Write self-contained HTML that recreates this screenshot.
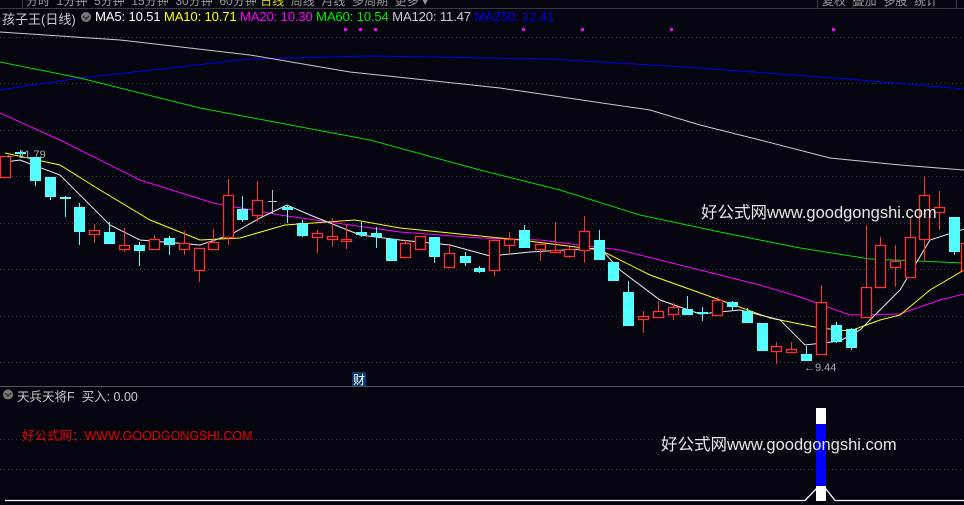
<!DOCTYPE html>
<html><head><meta charset="utf-8"><style>
body{margin:0;background:#05050f;width:964px;height:505px;overflow:hidden;position:relative;font-family:"Liberation Sans","Noto Sans CJK SC",sans-serif}
.t{position:absolute;white-space:nowrap}
</style></head><body>
<svg width="964" height="505" style="position:absolute;left:0;top:0" id="s">
<rect width="964" height="505" fill="#05050f"/>
<line x1="0" y1="8.5" x2="964" y2="8.5" stroke="#3a3a44"/>
<line x1="22.5" y1="0" x2="22.5" y2="8" stroke="#3a3a44"/>
<line x1="817.5" y1="0" x2="817.5" y2="8" stroke="#3a3a44"/>
<line x1="853.5" y1="0" x2="853.5" y2="8" stroke="#3a3a44"/>
<line x1="886.5" y1="0" x2="886.5" y2="8" stroke="#3a3a44"/>
<line x1="921.5" y1="0" x2="921.5" y2="8" stroke="#3a3a44"/>
<line x1="956.5" y1="0" x2="956.5" y2="8" stroke="#3a3a44"/>
<g stroke="#3c3c48" stroke-dasharray="1,3">
<line x1="0" y1="37.5" x2="964" y2="37.5"/><line x1="0" y1="83.5" x2="964" y2="83.5"/>
<line x1="0" y1="130.5" x2="964" y2="130.5"/><line x1="0" y1="176.5" x2="964" y2="176.5"/>
<line x1="0" y1="223.5" x2="964" y2="223.5"/><line x1="0" y1="269.5" x2="964" y2="269.5"/>
<line x1="0" y1="316.5" x2="964" y2="316.5"/><line x1="0" y1="362.5" x2="964" y2="362.5"/>
<line x1="0" y1="439.5" x2="964" y2="439.5"/><line x1="0" y1="469.5" x2="964" y2="469.5"/>
</g>
<line x1="0" y1="386.5" x2="964" y2="386.5" stroke="#55555f"/>
<g fill="#ff00ff"><rect x="344" y="28" width="3" height="3"/><rect x="359" y="28" width="3" height="3"/><rect x="374" y="28" width="3" height="3"/><rect x="522" y="28" width="3" height="3"/><rect x="581" y="28" width="3" height="3"/><rect x="670" y="28" width="3" height="3"/><rect x="832" y="28" width="3" height="3"/></g>
<g fill="none" stroke-width="1">
<polyline stroke="#0000ee" points="0,90 80,78 250,59 370,56 550,59 700,68 860,80 964,89"/>
<polyline stroke="#cccccc" points="0,32 120,40 250,55 350,72 500,88 650,110 700,125 760,140 830,158 900,165 964,170"/>
<polyline stroke="#00dd00" points="0,62 80,78 200,108 370,140 480,170 560,190 640,215 720,232 800,248 870,259 964,263"/>
<polyline stroke="#ff00ff" points="0,113 60,140 140,180 213,203 280,215 400,232 480,238 540,240 620,250 700,270 760,285 800,297 850,315 900,314 940,300 964,294"/>
<polyline stroke="#ffff00" points="5,153 60,165 100,190 150,220 200,240 240,238 285,225 355,220 400,228 470,235 520,240 600,250 650,275 720,300 770,318 820,328 850,331 880,320 900,315 930,290 964,270"/>
<polyline stroke="#eeeeee" points="5,162 20,160 60,175 110,225 140,240 200,245 230,235 260,218 287,205 310,215 360,235 400,240 450,245 490,256 530,252 600,248 620,270 660,300 700,314 740,310 780,320 805,345 840,341 860,330 880,310 900,290 930,240 964,229"/>
</g>
<g id="c"></g>
<text x="5" y="158" fill="#aaaaaa" font-size="11" font-family="Liberation Sans">← 11.79</text>
<text x="804" y="371" fill="#aaaaaa" font-size="11" font-family="Liberation Sans">←9.44</text>
<rect x="352" y="372" width="14" height="14" fill="#0c3a6a"/>
<text x="353" y="384" fill="#ffffff" font-size="12" font-family="Noto Sans CJK SC">财</text>
<rect x="816" y="408" width="10" height="16" fill="#fff"/>
<rect x="816" y="424" width="10" height="62" fill="#0000ff"/>
<rect x="816" y="486" width="10" height="15" fill="#fff"/>
<polyline fill="none" stroke="#fff" stroke-width="1.3" points="5,500.5 805,500.5 816,489 826,489 835,500.5 964,500.5"/>
<circle cx="8" cy="394.5" r="5" fill="#777"/><polyline points="5,393 8,396 11,393" fill="none" stroke="#222" stroke-width="1.2"/>
<circle cx="86" cy="17" r="5" fill="#777"/><polyline points="83,16 86,19 89,16" fill="none" stroke="#222" stroke-width="1.2"/>
</svg>
<div class="t" style="left:26px;top:-8px;font-size:12px;color:#999">分时 &nbsp;1分钟 &nbsp;5分钟 &nbsp;15分钟 &nbsp;30分钟 &nbsp;60分钟 <span style="color:#dddd00">日线</span> &nbsp;周线 &nbsp;月线 &nbsp;多周期 &nbsp;更多 ▾</div>
<div class="t" style="left:822px;top:-8px;font-size:12px;color:#999">复权 &nbsp;叠加 &nbsp;多股 &nbsp;统计</div>
<div class="t" style="left:2px;top:9px;font-size:13px;color:#cccccc">孩子王(日线)</div>
<div class="t" style="left:95px;top:9px;font-size:13.2px;letter-spacing:-0.2px"><span style="color:#fff">MA5: 10.51</span> <span style="color:#ffff00">MA10: 10.71</span> <span style="color:#ff00ff">MA20: 10.30</span> <span style="color:#00ee00">MA60: 10.54</span> <span style="color:#ccc">MA120: 11.47</span> <span style="color:#0000ee">MA250: 12.41</span></div>
<div class="t" style="left:701px;top:199px;font-size:16.5px;color:#e8e8e8">好公式网www.goodgongshi.com</div>
<div class="t" style="left:661px;top:431px;font-size:16.5px;color:#e8e8e8">好公式网www.goodgongshi.com</div>
<div class="t" style="left:17px;top:386px;font-size:12.5px;color:#cccccc">天兵天将F &nbsp;<span>买入: 0.00</span></div>
<div class="t" style="left:22px;top:425px;font-size:12.5px;color:#ee0000">好公式网：WWW.GOODGONGSHI.COM</div>
<script>
var d=[[5,156,177,156,177,'r'],[20,152,154,150,158,'c'],[35,157,181,157,186,'c'],[50,177,197,177,200,'c'],[65,197,199,196,217,'c'],[79,207,232,203,245,'c'],[94,230,234,224,243,'r'],[109,232,244,222,244,'c'],[124,245,249,228,252,'r'],[139,245,251,242,266,'c'],[154,239,249,235,249,'r'],[169,238,245,236,255,'c'],[184,243,249,231,255,'r'],[199,248,270,248,282,'r'],[213,242,249,229,249,'r'],[228,195,237,179,245,'r'],[242,209,220,196,222,'c'],[257,200,215,181,222,'r'],[272,201,202,190,214,'g'],[287,207,210,205,223,'c'],[302,223,236,220,237,'c'],[317,233,237,230,253,'r'],[332,236,239,218,247,'r'],[346,239,241,224,249,'r'],[361,232,235,222,237,'c'],[376,233,237,227,248,'c'],[391,239,261,239,261,'c'],[405,243,257,240,258,'r'],[420,236,249,236,249,'r'],[434,237,257,237,263,'c'],[449,253,267,245,267,'r'],[465,256,263,252,266,'c'],[479,268,272,266,273,'c'],[494,240,270,237,276,'r'],[509,239,245,232,253,'r'],[524,230,248,225,248,'c'],[540,244,249,243,261,'r'],[555,250,252,222,252,'r'],[569,249,256,247,258,'r'],[584,231,250,216,263,'r'],[599,240,260,230,260,'c'],[613,262,281,262,281,'c'],[628,292,326,281,326,'c'],[643,316,319,311,333,'r'],[658,311,317,301,317,'r'],[673,307,314,303,320,'r'],[687,309,315,296,315,'c'],[702,312,314,307,321,'c'],[717,300,315,297,315,'r'],[732,302,307,301,311,'c'],[747,311,323,308,323,'c'],[762,323,351,323,351,'c'],[776,346,351,342,364,'r'],[791,349,352,342,352,'r'],[806,354,361,346,361,'c'],[821,302,354,285,354,'r'],[836,325,342,322,343,'c'],[851,329,348,328,350,'c'],[866,287,317,225,317,'r'],[880,245,287,237,287,'r'],[895,261,267,245,287,'r'],[910,237,277,217,277,'r'],[924,195,239,177,262,'r'],[939,207,212,191,230,'r'],[954,217,252,217,255,'c'],[966,243,270,235,275,'r']];
var h='';d.forEach(function(a){var x=a[0],o=a[1],c=a[2],hi=a[3],lo=a[4],k=a[5];var col=k=='r'?'#ff3030':k=='c'?'#55ffff':'#bbbbbb';
h+='<line x1="'+(x+.5)+'" y1="'+hi+'" x2="'+(x+.5)+'" y2="'+lo+'" stroke="'+col+'"/>';
if(k=='r')h+='<rect x="'+(x-4.5)+'" y="'+(o+.5)+'" width="10" height="'+Math.max(c-o,1)+'" fill="#05050f" stroke="'+col+'" stroke-width="1.3"/>';
else if(k=='g')h+='<line x1="'+(x-4)+'" y1="'+(o+.5)+'" x2="'+(x+5)+'" y2="'+(o+.5)+'" stroke="'+col+'"/>';
else h+='<rect x="'+(x-5)+'" y="'+o+'" width="11" height="'+Math.max(c-o,2)+'" fill="'+col+'"/>';});
document.getElementById('c').innerHTML=h;
</script>
</body></html>
